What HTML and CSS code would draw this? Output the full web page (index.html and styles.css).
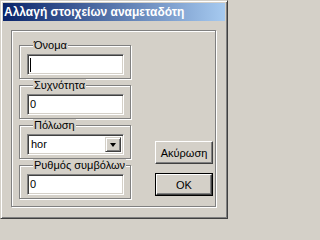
FILE: index.html
```html
<!DOCTYPE html>
<html lang="el">
<head>
<meta charset="utf-8">
<title>Αλλαγή στοιχείων αναμεταδότη</title>
<link rel="stylesheet" href="styles.css">
</head>
<body>
<div class="window">
  <div class="titlebar">Αλλαγή στοιχείων αναμεταδότη</div>
  <div class="client">
    <div class="etched outer">
      <div class="fields">
        <div class="etched group">
          <div class="legend">Όνομα</div>
          <div class="edit"><span class="caret"></span></div>
        </div>
        <div class="etched group">
          <div class="legend">Συχνότητα</div>
          <div class="edit">0</div>
        </div>
        <div class="etched group">
          <div class="legend">Πόλωση</div>
          <div class="edit combo"><span class="combo-text">hor</span><span class="drop"><span class="arrow"></span></span></div>
        </div>
        <div class="etched group">
          <div class="legend">Ρυθμός συμβόλων</div>
          <div class="edit">0</div>
        </div>
      </div>
      <div class="buttons">
        <div class="btn">Ακύρωση</div>
        <div class="btn default"><span class="btn-inner">OK</span></div>
      </div>
    </div>
  </div>
</div>
</body>
</html>
```
FILE: styles.css
```css
html, body {
  margin: 0;
  padding: 0;
  background: #d4d0c8;
}
body {
  font-family: "Liberation Sans", Arial, sans-serif;
  font-size: 11px;
  color: #000;
}
.window {
  box-sizing: border-box;
  width: 228px;
  height: 219px;
  border: 1px solid;
  border-color: #d4d0c8 #404040 #404040 #d4d0c8;
  box-shadow: inset 1px 1px #fff, inset -1px -1px #808080;
  padding: 2px;
  background: #d4d0c8;
  display: flex;
  flex-direction: column;
}
.titlebar {
  height: 18px;
  flex: none;
  background: linear-gradient(to right, #0a246a, #a6caf0);
  color: #fff;
  font-weight: bold;
  font-size: 12px;
  line-height: 18px;
  padding-left: 1px;
  white-space: nowrap;
  overflow: hidden;
}
.client {
  flex: 1;
  display: flex;
  align-items: flex-start;
}
.etched {
  border: 1px solid #808080;
  box-shadow: inset 1px 1px #fff, 1px 1px #fff;
}
.outer {
  box-sizing: border-box;
  width: 205px;
  height: 177px;
  margin: 9px 0 0 8px;
  display: flex;
}
.fields {
  padding: 14px 0 0 7px;
  display: flex;
  flex-direction: column;
  gap: 6px;
}
.group {
  box-sizing: border-box;
  width: 112px;
  height: 34px;
  padding: 0 0 0 7px;
}
.legend {
  width: fit-content;
  margin: -7px 0 0 6px;
  padding: 0 1px;
  height: 13px;
  line-height: 13px;
  background: #d4d0c8;
  position: relative;
}
.edit {
  box-sizing: border-box;
  width: 97px;
  height: 21px;
  margin-top: 2px;
  border: 1px solid;
  border-color: #808080 #fff #fff #808080;
  box-shadow: inset 1px 1px #404040, inset -1px -1px #d4d0c8;
  background: #fff;
  padding: 0 2px 0 2px;
  line-height: 19px;
  display: flex;
  align-items: center;
}
.caret {
  width: 1px;
  height: 14px;
  background: #000;
}
.combo {
  padding: 2px;
}
.combo-text {
  flex: 1;
  line-height: 15px;
  padding-left: 1px;
}
.drop {
  box-sizing: border-box;
  width: 16px;
  height: 100%;
  border: 1px solid;
  border-color: #d4d0c8 #404040 #404040 #d4d0c8;
  box-shadow: inset 1px 1px #fff, inset -1px -1px #808080;
  background: #d4d0c8;
  display: flex;
  align-items: center;
  justify-content: center;
}
.arrow {
  width: 0;
  height: 0;
  border-left: 3.5px solid transparent;
  border-right: 3.5px solid transparent;
  border-top: 4px solid #000;
  margin-top: 1px;
}
.buttons {
  margin-left: auto;
  margin-right: 2px;
  align-self: flex-end;
  display: flex;
  flex-direction: column;
  gap: 9px;
  padding-bottom: 10px;
}
.btn {
  box-sizing: border-box;
  width: 58px;
  height: 23px;
  border: 1px solid;
  border-color: #fff #404040 #404040 #fff;
  box-shadow: inset -1px -1px #808080;
  background: #d4d0c8;
  display: flex;
  align-items: center;
  justify-content: center;
}
.btn.default {
  border: 1px solid #000;
  box-shadow: none;
}
.btn-inner {
  box-sizing: border-box;
  width: 100%;
  height: 100%;
  border: 1px solid;
  border-color: #fff #404040 #404040 #fff;
  box-shadow: inset -1px -1px #808080;
  display: flex;
  align-items: center;
  justify-content: center;
}
```
